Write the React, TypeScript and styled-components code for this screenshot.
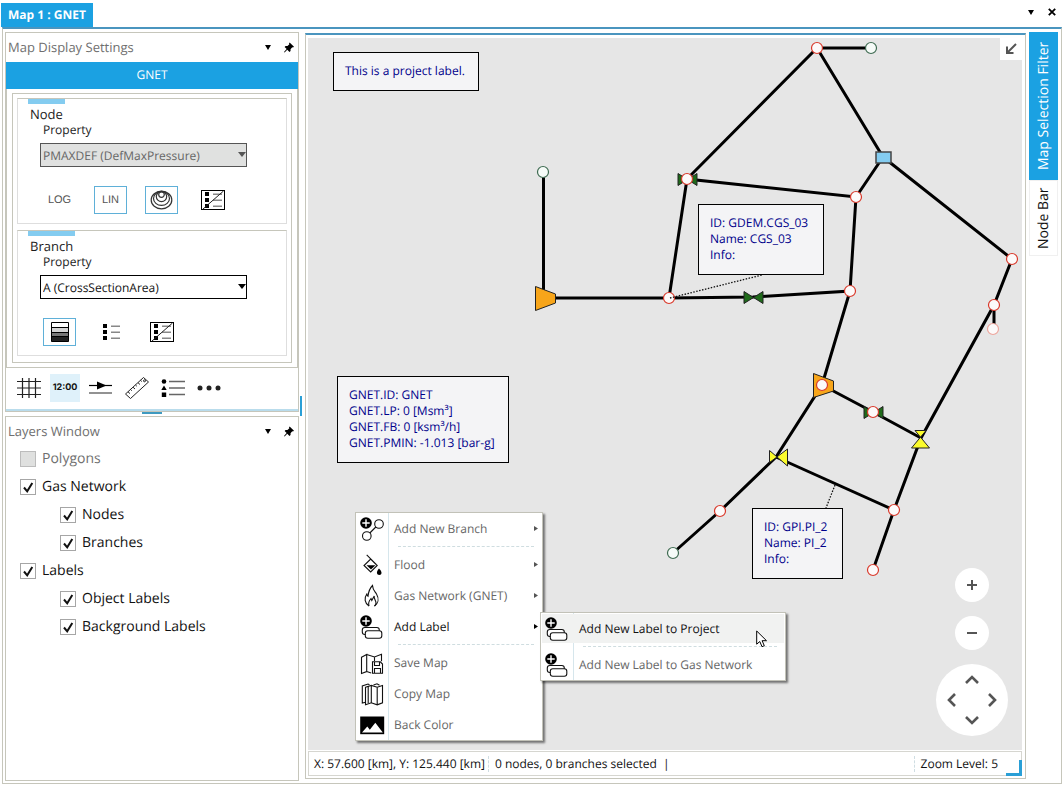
import React from "react";
import styled, { createGlobalStyle, css } from "styled-components";

const BLUE = "#1ba1e2";
const LINE = "#c6c6bb";
const EDGE = "#4a95bf";
const UI = `"Open Sans", "Noto Sans", sans-serif`;

const GlobalStyle = createGlobalStyle`
  *, *::before, *::after { box-sizing: border-box; }
  body { margin: 0; background: #fff; color: #1c1c1c; font: 12px/16px ${UI}; text-rendering: geometricPrecision; }
  button { font: inherit; color: inherit; padding: 0; border: 0; background: none; text-rendering: inherit; }
`;

/* ---------- window frame ---------- */

const Shell = styled.div`
  display: flex;
  flex-direction: column;
  min-height: 100vh;
  padding: 3px 1px 2px;
`;

const TabBar = styled.header`
  display: flex;
  justify-content: space-between;
  height: 24px;
`;

const DocumentTab = styled.button`
  width: 92px;
  background: ${BLUE};
  color: #fff;
  font-weight: 700;
  font-size: 12px;
  white-space: nowrap;
`;

const WindowTools = styled.div`
  display: flex;
  gap: 11px;
  padding: 4px 5px 0 0;
  align-items: flex-start;
`;

const IconButton = styled.button`
  display: flex;
  align-items: center;
  justify-content: center;
  width: 10px;
  height: 10px;
`;

const Frame = styled.main`
  flex: 1;
  display: flex;
  margin-left: 1px;
  padding: 3px 3px 2px 2px;
  border: 1px solid ${LINE};
  border-top: 2px solid ${EDGE};
`;

/* ---------- left column ---------- */

const Sidebar = styled.aside`
  display: flex;
  flex-direction: column;
  flex: 0 0 294px;
`;

const Panel = styled.section<{ $grow?: boolean }>`
  border: 1px solid ${LINE};
  ${(p) => p.$grow && "flex: 1;"}
`;

const PanelTitle = styled.div`
  display: flex;
  align-items: center;
  gap: 11px;
  height: 28px;
  padding: 0 4px 0 2px;
  color: #6f6f6f;
`;

const PanelName = styled.h2`
  flex: 1;
  margin: 0;
  font-size: 13px;
  font-weight: 400;
`;

const NetworkHeader = styled.div`
  height: 27px;
  margin-top: 1px;
  line-height: 25px;
  text-align: center;
  background: ${BLUE};
  color: #fff;
`;

const SettingsBody = styled.div`
  padding: 4px 5px;
  border: 1px solid ${LINE};
  border-top: 0;
`;

const SettingsBox = styled.div`
  display: flex;
  flex-direction: column;
  gap: 6px;
  padding: 4px 4px 6px;
  border: 1px solid ${LINE};
`;

const Group = styled.section`
  height: 126px;
  padding: 0 10px;
  border: 1px solid #dedede;
  border-top-color: ${LINE};
`;

const GroupName = styled.h3`
  width: fit-content;
  margin: 0;
  padding: 1px 2px 0;
  border-top: 5px solid #84ccf0;
  font-size: 13px;
  font-weight: 400;
  line-height: 18px;
`;

const FieldLabel = styled.label`
  display: block;
  padding-left: 15px;
  line-height: 14px;
`;

const SelectWrap = styled.div`
  position: relative;
  width: 207px;
  margin: 6px 0 0 12px;
  svg { position: absolute; right: 1px; top: 9px; pointer-events: none; }
`;

const Select = styled.select`
  appearance: none;
  display: block;
  width: 100%;
  height: 24px;
  padding: 0 2px;
  border: 1px solid #000;
  border-radius: 0;
  background: #fff;
  color: #111;
  font: 12px ${UI};
  text-rendering: inherit;
  &:disabled { background: #e0e1e0; border-color: #555; color: #666; opacity: 1; }
`;

const ButtonRow = styled.div`
  display: flex;
  gap: 18px;
  margin: 19px 0 0 15px;
`;

const ModeButton = styled.button<{ $on?: boolean }>`
  display: flex;
  align-items: center;
  justify-content: center;
  width: 33px;
  height: 28px;
  border: 1px solid ${(p) => (p.$on ? "#5fb0d8" : "transparent")};
  color: #555;
  font: 11px "Liberation Sans", Arial, sans-serif;
`;

const Toolbar = styled.div`
  display: flex;
  align-items: center;
  gap: 6px;
  height: 43px;
  padding: 0 0 2px 8px;
  border-bottom: 2px solid #b9dcec;
`;

const Tool = styled.button<{ $on?: boolean }>`
  display: flex;
  align-items: center;
  justify-content: center;
  width: 30px;
  height: 28px;
  background: ${(p) => (p.$on ? "#dff1fa" : "none")};
  color: #111;
  font: 700 9px Inter, sans-serif;
`;

const Splitter = styled.div<{ $vertical?: boolean }>`
  display: flex;
  ${(p) =>
    p.$vertical
      ? css`flex: 0 0 6px; padding: 364px 0 0 1px; &::after { content: ""; width: 2px; height: 20px; background: #2a9fd6; }`
      : css`height: 4px; justify-content: center; &::after { content: ""; width: 20px; height: 2px; background: #3f9ac0; }`}
`;

const LayerRow = styled.label<{ $nested?: boolean; $muted?: boolean }>`
  display: flex;
  align-items: center;
  gap: 6px;
  height: 28px;
  padding-left: ${(p) => (p.$nested ? 54 : 14)}px;
  color: ${(p) => (p.$muted ? "#6f6f6f" : "#111")};
  font-size: 14px;
`;

const CheckWrap = styled.span`
  position: relative;
  width: 16px;
  height: 16px;
  svg { position: absolute; left: 0; top: 0; pointer-events: none; }
`;

const CheckBox = styled.input`
  appearance: none;
  display: block;
  width: 16px;
  height: 16px;
  margin: 0;
  border: 1px solid #a6a6a6;
  background: #fff;
  &:disabled { background: #dfe0df; border-color: #bcbcbc; }
`;

/* ---------- map ---------- */

const MapPanel = styled.section`
  flex: 1;
  min-width: 0;
  display: flex;
  flex-direction: column;
  margin-bottom: 2px;
  padding: 3px 3px 2px 2px;
  border: 1px solid ${LINE};
  border-top: 2px solid ${EDGE};
  margin-top: 1px;
`;

const Canvas = styled.div`
  position: relative;
  flex: 1;
  overflow: hidden;
  background: #e6e6e6;
`;

const Network = styled.svg`
  position: absolute;
  left: 0;
  top: 0;
`;

const MapLabel = styled.div<{ $x: number; $y: number; $w: number }>`
  position: absolute;
  left: ${(p) => p.$x}px;
  top: ${(p) => p.$y}px;
  width: ${(p) => p.$w}px;
  padding: 10px 0 11px 11px;
  border: 1px solid #000;
  background: #f4f4f6;
  color: #00008b;
  font-size: 12px;
  line-height: 16px;
  white-space: nowrap;
`;

const CollapseButton = styled.button`
  position: absolute;
  right: 0;
  top: 0;
  display: flex;
  align-items: center;
  justify-content: center;
  width: 22px;
  height: 22px;
  background: #fff;
`;

const MapControls = styled.div`
  position: absolute;
  right: 14px;
  bottom: 14px;
  display: flex;
  flex-direction: column;
  align-items: center;
  gap: 14px;
`;

const RoundButton = styled.button`
  display: flex;
  align-items: center;
  justify-content: center;
  width: 34px;
  height: 34px;
  border-radius: 50%;
  background: #fff;
`;

const PanPad = styled.div`
  display: grid;
  grid-template-columns: repeat(3, 20px);
  grid-template-rows: repeat(3, 20px);
  place-content: center;
  width: 72px;
  height: 72px;
  border-radius: 50%;
  background: #fff;
`;

const PanButton = styled.button<{ $area: string }>`
  grid-area: ${(p) => p.$area};
  display: flex;
  align-items: center;
  justify-content: center;
`;

const StatusBar = styled.footer`
  position: relative;
  display: flex;
  align-items: center;
  height: 25px;
  margin-top: 1px;
  padding: 0 23px 0 5px;
  border: 1px solid #d6d6d0;
  color: #111;
  white-space: nowrap;
`;

const StatusItem = styled.span<{ $rule?: boolean; $last?: boolean }>`
  ${(p) => p.$rule && "padding-left: 6px; border-left: 1px dashed #cfdde2; margin-left: 3px;"}
  ${(p) => p.$last && "margin-left: auto;"}
`;

const Grip = styled.span`
  position: absolute;
  right: -1px;
  bottom: -1px;
  width: 16px;
  height: 16px;
  border: solid #2a9fd6;
  border-width: 0 3px 3px 0;
`;

/* ---------- menus ---------- */

const Menu = styled.div<{ $x: number; $y: number; $w: number }>`
  position: absolute;
  left: ${(p) => p.$x}px;
  top: ${(p) => p.$y}px;
  width: ${(p) => p.$w}px;
  border: 1px solid #c2c2b8;
  background: linear-gradient(to right, #fff 32px, #d6e6ec 32px, #d6e6ec 33px, #fff 33px);
  box-shadow: 2px 2px 2px rgba(0, 0, 0, 0.5);
`;

const MenuItem = styled.button<{ $on?: boolean; $hot?: boolean }>`
  display: flex;
  align-items: center;
  width: 100%;
  height: 31px;
  padding: 0 4px 0 3px;
  gap: 9px;
  text-align: left;
  white-space: nowrap;
  color: ${(p) => (p.$on ? "#111" : "#666")};
  ${(p) => p.$hot && "background: linear-gradient(#f1f2f1, #f1f2f1) center / calc(100% - 2px) 29px no-repeat;"}
`;

const MenuText = styled.span`
  flex: 1;
`;

const MenuRule = styled.div`
  height: 5px;
  margin: 0 8px 0 42px;
  &::before { content: ""; display: block; padding-top: 2px; border-bottom: 1px dashed #cfdde0; }
`;

const Pointer = styled.svg`
  position: absolute;
  left: 448px;
  top: 592px;
  pointer-events: none;
`;

/* ---------- right tabs ---------- */

const SideTabs = styled.nav`
  display: flex;
  flex-direction: column;
  flex: 0 0 29px;
  margin-left: 3px;
`;

const SideTab = styled.button<{ $on?: boolean }>`
  writing-mode: vertical-rl;
  transform: rotate(180deg);
  height: ${(p) => (p.$on ? 148 : 76)}px;
  border: 1px solid ${(p) => (p.$on ? BLUE : "#f0f0f0")};
  background: ${(p) => (p.$on ? BLUE : "#fff")};
  color: ${(p) => (p.$on ? "#fff" : "#111")};
  font-size: 14px;
  white-space: nowrap;
`;

/* ---------- icons ---------- */

const Caret = ({ color = "#000", w = 6 }: { color?: string; w?: number }) => (
  <svg width={w} height="5" viewBox="0 0 8 5" preserveAspectRatio="none"><path d="M0 0h8L4 5z" fill={color} /></svg>
);

const PinIcon = () => (
  <svg width="11" height="11" viewBox="0 0 11 11">
    <path d="M6.2 0 11 4.800 9.900 5.600 9.100 5.200 7.200 7.400 7.200 9.400 6 10.400 3.600 8 .6 10.900 0 10.400 2.900 7.200.7 5 1.700 3.900 3.800 3.900 5.900 2 5.500 1z" />
  </svg>
);

const RingsIcon = () => (
  <svg width="23" height="20" viewBox="0 0 23 20" fill="none" stroke="#333" strokeWidth="1.2">
    <ellipse cx="11.5" cy="10" rx="10.3" ry="8.8" />
    <ellipse cx="11.5" cy="8.4" rx="8" ry="7" />
    <ellipse cx="11.5" cy="6.6" rx="5.2" ry="5" />
    <circle cx="11.5" cy="4.6" r="2.8" />
  </svg>
);

const ListIcon = ({ boxed }: { boxed?: boolean }) => (
  <svg width="24" height="20" viewBox="0 0 24 20">
    {boxed && <rect x=".5" y=".5" width="23" height="19" fill="none" stroke="#000" />}
    <path d="M4 2h4v4H4zM4 8h4v4H4zM4 14h4v4H4z" />
    <path d="M12 4.2h9M12 10.2h9M12 16.2h9" stroke="#888" strokeWidth="1.6" />
    {boxed && <path d="M2 19 22.500 1" stroke="#222" />}
  </svg>
);

const BandsIcon = () => (
  <svg width="18" height="20" viewBox="0 0 18 20">
    <rect x=".5" y=".5" width="17" height="5" fill="#fff" />
    <rect x=".5" y="5.500" width="17" height="5" fill="#d4d4d4" />
    <rect x=".5" y="10.500" width="17" height="4" fill="#777" />
    <rect x=".5" y="14.500" width="17" height="5" fill="#222" />
    <path d="M.5.5h17v19H.5zM.5 5.500h17M.5 10.500h17M.5 14.500h17" fill="none" stroke="#000" />
  </svg>
);

const GridIcon = () => (
  <svg width="24" height="22" viewBox="0 0 24 22" stroke="#222" strokeWidth="1.2">
    <path d="M5.500 1v20M12 1v20M18.500 1v20M0 4.500h24M0 11h24M0 17.500h24" />
  </svg>
);

const FlowIcon = () => (
  <svg width="24" height="14" viewBox="0 0 24 14">
    <path d="M0 4.500h23" stroke="#000" strokeWidth="1.2" />
    <path d="M8 .5 17.500 4.500 8 8.500z" />
    <path d="M0 12h23" stroke="#777" strokeWidth="1.600" />
  </svg>
);

const RulerIcon = () => (
  <svg width="26" height="24" viewBox="0 0 26 24" fill="none" stroke="#222">
    <path d="M19.500 1.500 24.500 6 6.500 22.500 1.500 18z" />
    <path d="m4 15.800 2 1.800M6.500 13.500l1.300 1.200M9 11.200l2 1.800M11.500 9l1.300 1.200M14 6.700l2 1.800M16.500 4.300l1.300 1.200" />
    <circle cx="20.500" cy="4.800" r="1" />
  </svg>
);

const LegendIcon = () => (
  <svg width="24" height="18" viewBox="0 0 24 18">
    <circle cx="3" cy="2.500" r="2.300" />
    <path d="M3 6.500 5.700 11H.3zM.8 13.500h4.400v4.400H.8z" />
    <path d="M8 2.500h16M8 9h16M8 15.500h16" stroke="#666" strokeWidth="1.500" />
  </svg>
);

const DotsIcon = () => (
  <svg width="24" height="6" viewBox="0 0 24 6" fill="#222">
    <circle cx="3" cy="3" r="2.500" /><circle cx="12" cy="3" r="2.500" /><circle cx="21" cy="3" r="2.500" />
  </svg>
);

const MenuSvg = ({ children }: { children: React.ReactNode }) => (
  <svg width="26" height="26" viewBox="0 0 26 26" fill="none" stroke="#111" strokeWidth="1.1">{children}</svg>
);

const PlusDisc = () => (
  <>
    <circle cx="7" cy="7" r="5.800" fill="#000" stroke="none" />
    <path d="M7 3.300v7.400M3.300 7h7.400" stroke="#fff" strokeWidth="1.400" />
  </>
);

const icons = {
  branch: <MenuSvg><PlusDisc /><circle cx="20" cy="8" r="4.300" /><circle cx="7.800" cy="20" r="4.300" /><path d="m10.800 17 6-6" /></MenuSvg>,
  flood: (
    <MenuSvg>
      <path d="m11.700 7 6.500 6.500-6.500 6.500L5 13.500zM7.700 2.800l9.500 9.500" />
      <path d="M7.500 13.300h9L12 17.500z" fill="#000" stroke="none" />
      <path d="M20 16.500c3.500 3 3 6.500.3 6.500s-3.500-3-.3-6.500z" fill="#000" stroke="none" />
    </MenuSvg>
  ),
  flame: (
    <MenuSvg>
      <path d="M10 23C5.500 20 5 15 7.800 11c.3 1.500.7 2 1.200 2.300C9.500 8.500 10.500 5.500 13.500 2.500c.2 4.500 2.500 6 4 8.500 3 5 1.500 9.500-2 12" />
      <path d="M10 23c-1-3 .2-5.500 2-7.500l.8 2 2.400-4.500c-.4 3 1.800 4.500 1.800 7 0 1.300-.5 2.200-1.500 3" />
    </MenuSvg>
  ),
  label: (
    <MenuSvg>
      <PlusDisc />
      <rect x="3.300" y="13.500" width="17" height="7" rx="2.500" fill="#fff" />
      <rect x="6.300" y="16.800" width="16.500" height="7.400" rx="2.500" fill="#fff" />
    </MenuSvg>
  ),
  save: (
    <MenuSvg>
      <path d="M2.500 7.200 7.700 4.500v17l-5.200 2zM7.700 4.500l7.800 2.500 7-2.800v7M15.500 7v4M7.700 21.500l4.500 1.500" />
      <path d="M13.500 11.800h7.800l2.200 2.200v9.200h-10zM15.500 12v3.500h5V12M15.500 23v-4.500h6V23" />
    </MenuSvg>
  ),
  copy: (
    <MenuSvg>
      <path d="m6.500 6.200 5.800-1.800 5.900 1.800 5.300-1.800v17.400l-5.300 2-5.900-2-5.800 2zM12.300 4.500v17.300M18.200 6.200v17.500" />
      <path d="M6.500 21.200 3.300 22V5L9 3l1.500.8M9.200 5v17M14.500 4l3.500-1.200 2.500 1.500" />
    </MenuSvg>
  ),
  back: (
    <MenuSvg>
      <path d="M1.200 4.500h24v17.700h-24z" fill="#000" stroke="none" />
      <path d="M3 20.500 8.300 14.500l2.500 3.200 5.500-7 7.500 9.800z" fill="#fff" stroke="none" />
    </MenuSvg>
  ),
};

const Chevron = ({ turn }: { turn: number }) => (
  <svg width="16" height="16" viewBox="0 0 16 16" fill="none" stroke="#555" strokeWidth="2.600">
    <path d="m2 11 6-6 6 6" transform={`rotate(${turn} 8 8)`} />
  </svg>
);

/* ---------- network data ---------- */

const pipes = [
  "M871 48H817L687 179 856 197 883 157 817 48",
  "M883 157 1012 259 994 305 921 438 894 510 873 570",
  "M994 305V329",
  "M687 179 669 298H543.500V172",
  "M669 298 753 297 850 291 856 197",
  "M850 291 822 385 776 457 720 511 673 553",
  "M822 385 873 412 921 438",
  "M776 457 894 510",
];

const redNodes = [[817, 48], [687, 179], [856, 197], [669, 298], [850, 291], [1012, 259], [994, 305], [822, 385], [873, 412], [720, 511], [894, 510], [873, 570]];
const greenNodes = [[871, 48], [543, 172], [673, 553]];
const valves = [[687, 179], [753, 297], [873, 412]];

const NetworkMap = () => (
  <Network width="714" height="712" viewBox="308 38 714 712">
    <g fill="none" stroke="#000" strokeWidth="3">{pipes.map((d) => <path key={d} d={d} />)}</g>
    {valves.map(([x, y]) => (
      <path key={x} d={`M${x - 9} ${y - 5.5}v12L${x + 10} ${y - 5.5}v12z`} fill="#1f6b1a" stroke="#222" />
    ))}
    <path d="M535.500 286.500v24l20-7.500v-9zM813.500 373.500v24l20-6.500v-10z" fill="#f7a51a" stroke="#222" />
    <path d="M769.500 450.500v12l18-13.500v17zM915 430.500h11l-14.500 17.500h18z" fill="#fbfb2c" stroke="#222" />
    <rect x="876" y="152" width="15" height="11" fill="#84ccf0" stroke="#444" strokeWidth="1.500" />
    <g fill="#fcfafa" stroke="#d9392b" strokeWidth="1.200">
      {redNodes.map(([x, y]) => <circle key={`${x}-${y}`} cx={x} cy={y} r="5.500" />)}
      <circle cx="993" cy="329" r="5.500" stroke="#eda59c" />
    </g>
    <g fill="#f6fbf8" stroke="#3f6b52" strokeWidth="1.200">
      {greenNodes.map(([x, y]) => <circle key={x} cx={x} cy={y} r="5.500" />)}
    </g>
    <path d="M670 298 762 275M835 485 826 508" fill="none" stroke="#111" strokeWidth="1.300" strokeDasharray="1.500 1.500" />
  </Network>
);

const labels = [
  { x: 25, y: 14, w: 146, lines: ["This is a project label."] },
  { x: 29, y: 338, w: 172, lines: ["GNET.ID: GNET", "GNET.LP: 0 [Msm³]", "GNET.FB: 0 [ksm³/h]", "GNET.PMIN: -1.013 [bar-g]"] },
  { x: 390, y: 166, w: 126, lines: ["ID: GDEM.CGS_03", "Name: CGS_03", "Info:"] },
  { x: 444, y: 470, w: 91, lines: ["ID: GPI.PI_2", "Name: PI_2", "Info:"] },
];

const layers = [
  { name: "Polygons", disabled: true },
  { name: "Gas Network" },
  { name: "Nodes", nested: true },
  { name: "Branches", nested: true },
  { name: "Labels" },
  { name: "Object Labels", nested: true },
  { name: "Background Labels", nested: true },
];

const Item = ({ icon, text, on, hot, sub }: { icon: keyof typeof icons; text: string; on?: boolean; hot?: boolean; sub?: boolean }) => (
  <MenuItem type="button" role="menuitem" $on={on} $hot={hot}>
    {icons[icon]}
    <MenuText>{text}</MenuText>
    {sub && <svg width="4" height="8" viewBox="0 0 4 8"><path d="M0 1 4 3.500 0 6z" fill={on ? "#000" : "#555"} /></svg>}
  </MenuItem>
);

const Title = ({ name }: { name: string }) => (
  <PanelTitle>
    <PanelName>{name}</PanelName>
    <IconButton type="button" aria-label={`${name} options`}><Caret /></IconButton>
    <IconButton type="button" aria-label={`Pin ${name}`}><PinIcon /></IconButton>
  </PanelTitle>
);

const PropertyField = ({ id, value, disabled }: { id: string; value: string; disabled?: boolean }) => (
  <>
    <FieldLabel htmlFor={id}>Property</FieldLabel>
    <SelectWrap>
      <Select id={id} disabled={disabled}><option>{value}</option></Select>
      <Caret w={8} color={disabled ? "#555" : "#000"} />
    </SelectWrap>
  </>
);

export default function App() {
  return (
    <Shell>
      <GlobalStyle />
      <TabBar>
        <DocumentTab type="button">Map 1 : GNET</DocumentTab>
        <WindowTools>
          <IconButton type="button" aria-label="Window list"><Caret /></IconButton>
          <IconButton type="button" aria-label="Close">
            <svg width="8" height="8" viewBox="0 0 8 8"><path d="m.8.8 6.400 6.400M7.200.8.8 7.200" stroke="#000" strokeWidth="1.800" /></svg>
          </IconButton>
        </WindowTools>
      </TabBar>
      <Frame>
        <Sidebar>
          <Panel>
            <Title name="Map Display Settings" />
            <NetworkHeader>GNET</NetworkHeader>
            <SettingsBody>
              <SettingsBox>
                <Group>
                  <GroupName>Node</GroupName>
                  <PropertyField id="node-property" value="PMAXDEF (DefMaxPressure)" disabled />
                  <ButtonRow>
                    <ModeButton type="button">LOG</ModeButton>
                    <ModeButton type="button" $on>LIN</ModeButton>
                    <ModeButton type="button" $on aria-label="Rings"><RingsIcon /></ModeButton>
                    <ModeButton type="button" aria-label="Legend off"><ListIcon boxed /></ModeButton>
                  </ButtonRow>
                </Group>
                <Group>
                  <GroupName>Branch</GroupName>
                  <PropertyField id="branch-property" value="A (CrossSectionArea)" />
                  <ButtonRow>
                    <ModeButton type="button" $on aria-label="Color bands"><BandsIcon /></ModeButton>
                    <ModeButton type="button" aria-label="Legend"><ListIcon /></ModeButton>
                    <ModeButton type="button" aria-label="Legend off"><ListIcon boxed /></ModeButton>
                  </ButtonRow>
                </Group>
              </SettingsBox>
            </SettingsBody>
            <Toolbar>
              <Tool type="button" aria-label="Grid"><GridIcon /></Tool>
              <Tool type="button" $on>12:00</Tool>
              <Tool type="button" aria-label="Flow direction"><FlowIcon /></Tool>
              <Tool type="button" aria-label="Measure"><RulerIcon /></Tool>
              <Tool type="button" aria-label="Symbols"><LegendIcon /></Tool>
              <Tool type="button" aria-label="More"><DotsIcon /></Tool>
            </Toolbar>
          </Panel>
          <Splitter />
          <Panel $grow>
            <Title name="Layers Window" />
            {layers.map((l) => (
              <LayerRow key={l.name} $nested={l.nested} $muted={l.disabled}>
                <CheckWrap>
                  <CheckBox type="checkbox" defaultChecked={!l.disabled} disabled={l.disabled} />
                  {!l.disabled && (
                    <svg width="16" height="16" viewBox="0 0 16 16"><path d="m4 8.500 3.200 3.800L12.300 4" fill="none" stroke="#111" strokeWidth="2" /></svg>
                  )}
                </CheckWrap>
                {l.name}
              </LayerRow>
            ))}
          </Panel>
        </Sidebar>
        <Splitter $vertical />
        <MapPanel>
          <Canvas>
            <NetworkMap />
            {labels.map((l) => (
              <MapLabel key={l.y} $x={l.x} $y={l.y} $w={l.w}>
                {l.lines.map((t) => <div key={t}>{t}</div>)}
              </MapLabel>
            ))}
            <CollapseButton type="button" aria-label="Collapse">
              <svg width="12" height="12" viewBox="0 0 12 12" fill="none" stroke="#555" strokeWidth="2"><path d="M11 1 3 9M2 3.500V10h6.500" /></svg>
            </CollapseButton>
            <MapControls>
              <RoundButton type="button" aria-label="Zoom in"><svg width="10" height="10"><path d="M5 0v10M0 5h10" stroke="#555" strokeWidth="2" /></svg></RoundButton>
              <RoundButton type="button" aria-label="Zoom out"><svg width="10" height="10"><path d="M0 5h10" stroke="#555" strokeWidth="2" /></svg></RoundButton>
              <PanPad>
                <PanButton type="button" aria-label="Up" $area="1 / 2"><Chevron turn={0} /></PanButton>
                <PanButton type="button" aria-label="Left" $area="2 / 1"><Chevron turn={-90} /></PanButton>
                <PanButton type="button" aria-label="Right" $area="2 / 3"><Chevron turn={90} /></PanButton>
                <PanButton type="button" aria-label="Down" $area="3 / 2"><Chevron turn={180} /></PanButton>
              </PanPad>
            </MapControls>
            <Menu role="menu" $x={47} $y={474} $w={188}>
              <Item icon="branch" text="Add New Branch" sub />
              <MenuRule />
              <Item icon="flood" text="Flood" sub />
              <Item icon="flame" text="Gas Network (GNET)" sub />
              <Item icon="label" text="Add Label" on sub />
              <MenuRule />
              <Item icon="save" text="Save Map" />
              <Item icon="copy" text="Copy Map" />
              <Item icon="back" text="Back Color" />
            </Menu>
            <Menu role="menu" $x={232} $y={574} $w={246}>
              <Item icon="label" text="Add New Label to Project" on hot />
              <MenuRule />
              <Item icon="label" text="Add New Label to Gas Network" />
            </Menu>
            <Pointer width="12" height="18" viewBox="0 0 12 18">
              <path d="M.7 1v13.200L3.800 11.500 6 16.700l2.300-1L6.100 10.700h4.400z" fill="#fff" stroke="#000" />
            </Pointer>
          </Canvas>
          <StatusBar>
            <StatusItem>X: 57.600 [km], Y: 125.440 [km]</StatusItem>
            <StatusItem $rule>0 nodes, 0 branches selected &nbsp;|</StatusItem>
            <StatusItem $rule $last>Zoom Level: 5</StatusItem>
            <Grip />
          </StatusBar>
        </MapPanel>
        <SideTabs>
          <SideTab type="button" $on>Map Selection Filter</SideTab>
          <SideTab type="button">Node Bar</SideTab>
        </SideTabs>
      </Frame>
    </Shell>
  );
}
